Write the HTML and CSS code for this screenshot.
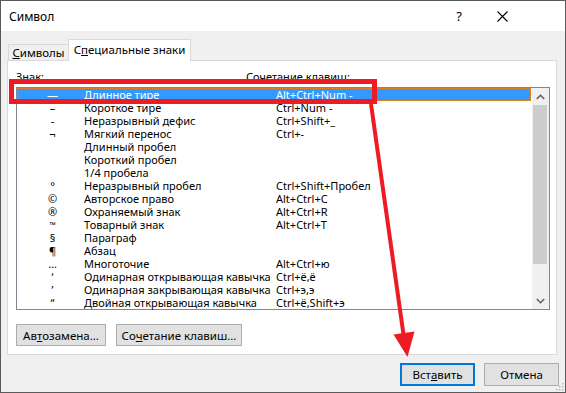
FILE: index.html
```html
<!DOCTYPE html>
<html lang="ru">
<head>
<meta charset="utf-8">
<title>Символ</title>
<link rel="stylesheet" href="styles.css">
</head>
<body>
<div class="win">
  <div class="titlebar">
    <span class="title">Символ</span>
    <span class="help">?</span>
    <svg class="close" width="11" height="11" viewBox="0 0 11 11"><path d="M0.5 0.5 L10.5 10.5 M10.5 0.5 L0.5 10.5" stroke="#000" stroke-width="1.1" fill="none"/></svg>
  </div>
  <div class="content">
    <div class="tabs">
      <div class="tab"><u>С</u>имволы</div>
      <div class="tab active">С<u>п</u>ециальные знаки</div>
    </div>
    <div class="panel">
      <div class="hdr"><span class="h1">Знак:</span><span>Сочетание клавиш:</span></div>
      <div class="listbox">
        <div class="rows">
          <div class="row sel"><span class="sym">—</span><span class="name">Длинное тире</span><span class="key">Alt+Ctrl+Num -</span></div>
          <div class="row"><span class="sym">–</span><span class="name">Короткое тире</span><span class="key">Ctrl+Num -</span></div>
          <div class="row"><span class="sym">-</span><span class="name">Неразрывный дефис</span><span class="key">Ctrl+Shift+_</span></div>
          <div class="row"><span class="sym">¬</span><span class="name">Мягкий перенос</span><span class="key">Ctrl+-</span></div>
          <div class="row"><span class="sym"></span><span class="name">Длинный пробел</span><span class="key"></span></div>
          <div class="row"><span class="sym"></span><span class="name">Короткий пробел</span><span class="key"></span></div>
          <div class="row"><span class="sym"></span><span class="name">1/4 пробела</span><span class="key"></span></div>
          <div class="row"><span class="sym">°</span><span class="name">Неразрывный пробел</span><span class="key">Ctrl+Shift+Пробел</span></div>
          <div class="row"><span class="sym">©</span><span class="name">Авторское право</span><span class="key">Alt+Ctrl+C</span></div>
          <div class="row"><span class="sym">®</span><span class="name">Охраняемый знак</span><span class="key">Alt+Ctrl+R</span></div>
          <div class="row"><span class="sym tm">™</span><span class="name">Товарный знак</span><span class="key">Alt+Ctrl+T</span></div>
          <div class="row"><span class="sym">§</span><span class="name">Параграф</span><span class="key"></span></div>
          <div class="row"><span class="sym">¶</span><span class="name">Абзац</span><span class="key"></span></div>
          <div class="row"><span class="sym">…</span><span class="name">Многоточие</span><span class="key">Alt+Ctrl+ю</span></div>
          <div class="row"><span class="sym">‘</span><span class="name">Одинарная открывающая кавычка</span><span class="key">Ctrl+ё,ё</span></div>
          <div class="row"><span class="sym">’</span><span class="name">Одинарная закрывающая кавычка</span><span class="key">Ctrl+э,э</span></div>
          <div class="row"><span class="sym">“</span><span class="name">Двойная открывающая кавычка</span><span class="key">Ctrl+ё,Shift+э</span></div>
        </div>
        <div class="scroll">
          <div class="sbtn"><svg width="9" height="6" viewBox="0 0 9 6"><path d="M0.8 5 L4.5 1.3 L8.2 5" stroke="#606060" stroke-width="1.6" fill="none"/></svg></div>
          <div class="thumb"></div>
          <div class="track"></div>
          <div class="sbtn"><svg width="9" height="6" viewBox="0 0 9 6"><path d="M0.8 1 L4.5 4.7 L8.2 1" stroke="#606060" stroke-width="1.6" fill="none"/></svg></div>
        </div>
      </div>
      <div class="btnrow">
        <div class="btn w90">Ав<u>т</u>озамена...</div>
        <div class="btn w126">Со<u>ч</u>етание клавиш...</div>
      </div>
    </div>
    <div class="footer">
      <div class="btn primary">Вст<u>а</u>вить</div>
      <div class="btn">Отмена</div>
    </div>
  </div>
  <svg class="grip" width="9" height="9" viewBox="0 0 9 9">
    <rect x="7" y="1" width="1.5" height="1.5" fill="#b8b8b8"/>
    <rect x="4" y="4" width="1.5" height="1.5" fill="#b8b8b8"/>
    <rect x="7" y="4" width="1.5" height="1.5" fill="#b8b8b8"/>
    <rect x="1" y="7" width="1.5" height="1.5" fill="#b8b8b8"/>
    <rect x="4" y="7" width="1.5" height="1.5" fill="#b8b8b8"/>
    <rect x="7" y="7" width="1.5" height="1.5" fill="#b8b8b8"/>
  </svg>
  <svg class="annot" width="566" height="393" viewBox="0 0 566 393">
    <rect x="11.5" y="81.5" width="363" height="20" fill="none" stroke="#ed1c24" stroke-width="5"/>
    <line x1="371" y1="104" x2="404" y2="338" stroke="#ed1c24" stroke-width="4"/>
    <polygon points="393.5,334.5 414.5,331.5 407.5,357" fill="#ed1c24"/>
  </svg>
</div>
</body>
</html>
```

FILE: styles.css
```css
html, body {
  margin: 0;
  padding: 0;
  background: #fff;
}

body {
  font-family: "Noto Sans", "Open Sans", sans-serif;
  font-size: 11px;
  color: #000;
}

.win {
  position: relative;
  width: 566px;
  height: 393px;
  box-sizing: border-box;
  border: 1px solid #5a5a5a;
  background: #f0f0f0;
  display: flex;
  flex-direction: column;
  overflow: hidden;
}

.titlebar {
  height: 30px;
  background: #fff;
  display: flex;
  align-items: center;
  padding-left: 8px;
  flex: none;
}

.title {
  flex: 1;
  font-size: 12px;
}

.help {
  width: 14px;
  text-align: center;
  font-size: 13px;
  margin-right: 31px;
}

.close {
  margin-right: 57px;
}

.content {
  padding: 7px 6px 0 6px;
  display: flex;
  flex-direction: column;
}

.tabs {
  display: flex;
  align-items: flex-end;
  height: 22px;
  padding-left: 1px;
  position: relative;
  z-index: 1;
}

.tab {
  box-sizing: border-box;
  height: 16px;
  width: 61px;
  border: 1px solid #d9d9d9;
  border-bottom: none;
  background: #f0f0f0;
  display: flex;
  align-items: center;
  justify-content: center;
  line-height: 14px;
  font-size: 11.5px;
}

.tab.active {
  height: 22px;
  width: 123px;
  margin-left: -1px;
  margin-bottom: -1px;
  background: #fff;
  padding-bottom: 2px;
}

u {
  text-decoration: underline;
  text-underline-offset: 1px;
  text-decoration-thickness: 1px;
}

.panel {
  box-sizing: border-box;
  width: 550px;
  height: 295px;
  background: #fff;
  border: 1px solid #d9d9d9;
  padding: 9px 6px 0 8px;
  display: flex;
  flex-direction: column;
}

.hdr {
  display: flex;
  height: 13px;
  line-height: 13px;
  white-space: nowrap;
}

.hdr .h1 {
  width: 230px;
}

.listbox {
  box-sizing: border-box;
  margin-top: 4px;
  width: 534px;
  height: 223px;
  border: 1px solid #828790;
  display: flex;
}

.rows {
  flex: 1;
  display: flex;
  flex-direction: column;
  padding-right: 1px;
}

.row {
  height: 13px;
  line-height: 13px;
  display: grid;
  grid-template-columns: 67px 192px 1fr;
  white-space: nowrap;
  box-sizing: border-box;
}

.row.sel {
  background: #3399ff;
  color: #fff;
  outline: 1px dotted #e8892c;
  outline-offset: -1px;
}

.sym {
  text-align: center;
  padding-left: 4px;
}

.sym.tm {
  font-size: 8px;
}

.scroll {
  width: 17px;
  background: #f0f0f0;
  display: flex;
  flex-direction: column;
}

.sbtn {
  height: 17px;
  display: flex;
  align-items: center;
  justify-content: center;
  flex: none;
}

.thumb {
  height: 159px;
  margin: 0 2px 0 1px;
  background: #cdcdcd;
  flex: none;
}

.track {
  flex: 1;
}

.btnrow {
  display: flex;
  gap: 10px;
  margin-top: 14px;
}

.btn {
  box-sizing: border-box;
  height: 22px;
  border: 1px solid #adadad;
  background: #e1e1e1;
  display: flex;
  align-items: center;
  justify-content: center;
  white-space: nowrap;
  font-size: 11.5px;
}

.w90 { width: 90px; }
.w126 { width: 126px; }

.footer {
  display: flex;
  justify-content: flex-end;
  gap: 9px;
  margin-top: 8px;
}

.footer .btn {
  width: 75px;
  height: 23px;
}

.footer .btn.primary {
  border: 2px solid #0078d7;
}

.grip {
  position: absolute;
  right: 1px;
  bottom: 1px;
}

.annot {
  position: absolute;
  left: -1px;
  top: -1px;
  pointer-events: none;
}
```
